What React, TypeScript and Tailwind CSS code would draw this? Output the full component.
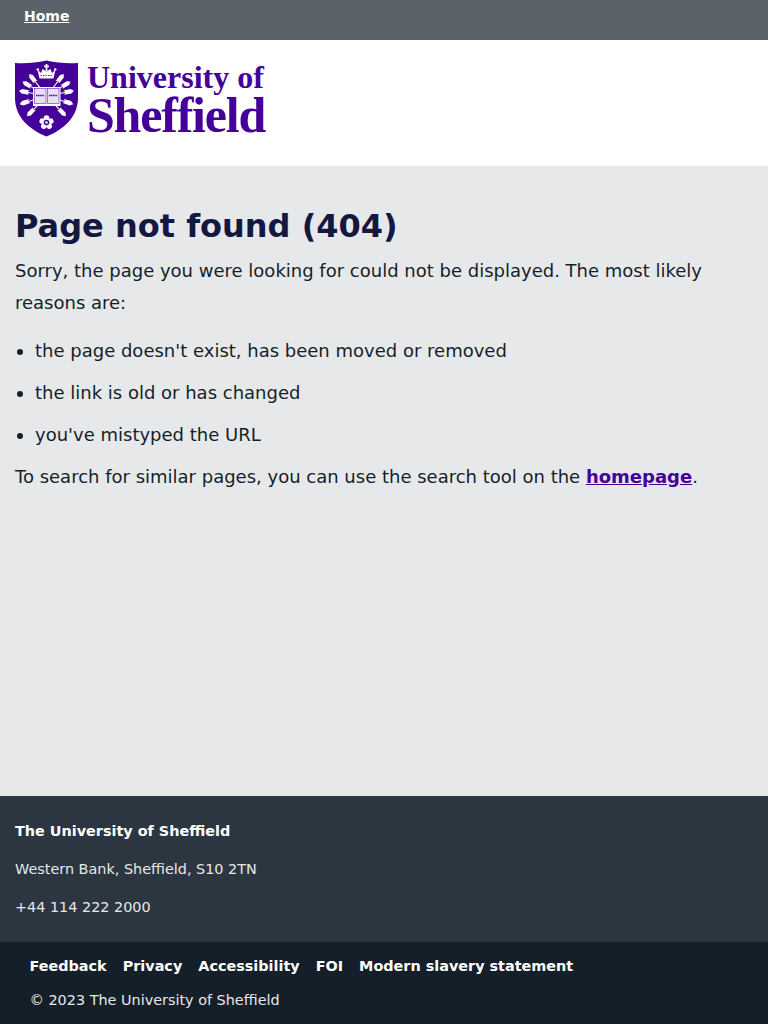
const sans = "font-['DejaVu_Sans',sans-serif]";

function Arrow({ angle }: { angle: number }) {
  return (
    <g transform={`rotate(${angle} 31.5 36)`}>
      <line x1="31.5" y1="36" x2="31.5" y2="12" stroke="#fff" strokeWidth="1.1" />
      <path d="M31.5 8 L33.8 11 L33.6 18.5 L31.5 16.5 L29.4 18.5 L29.2 11 Z" fill="#fff" />
    </g>
  );
}

function Shield() {
  return (
    <svg viewBox="0 0 64 77" className="h-[77px] w-[64px] shrink-0" aria-hidden="true">
      <path
        d="M0 3 C11 3.5 21 3 31.5 0.5 C42 3 52 3.5 63 3 L63 38 C63 56 50 69 31.5 76.5 C13 69 0 56 0 38 Z"
        fill="#440099"
      />
      {[-38, -59, -79, -107, -136, 38, 59, 79, 107, 136].map((a) => (
        <Arrow key={a} angle={a} />
      ))}
      {/* crown */}
      <path d="M22.5 9.5 L26 13 L27.5 9 L31.5 11.5 L35.5 9 L37 13 L40.5 9.5 L38.5 18.5 L24.5 18.5 Z" fill="#fff" />
      <circle cx="22.8" cy="9.5" r="1.3" fill="#fff" />
      <circle cx="40.2" cy="9.5" r="1.3" fill="#fff" />
      <rect x="30.6" y="4" width="1.8" height="7" fill="#fff" />
      <rect x="29" y="5.5" width="5" height="1.7" fill="#fff" />
      <path d="M25.5 15.5 H37.5" stroke="#440099" strokeWidth="0.8" strokeDasharray="1.5 1" />
      {/* book */}
      <rect x="18" y="27" width="27.5" height="19" fill="#fff" />
      <rect x="19.5" y="28.5" width="11.5" height="15" fill="#e9e0f4" stroke="#440099" strokeWidth="0.5" />
      <rect x="32.5" y="28.5" width="11.5" height="15" fill="#e9e0f4" stroke="#440099" strokeWidth="0.5" />
      <path d="M21 35.5 H29.5 M34 35.5 H42.5" stroke="#440099" strokeWidth="1.5" strokeDasharray="1.5 0.6" />
      {/* rose */}
      {[0, 72, 144, 216, 288].map((a) => (
        <circle key={a} cx="31.5" cy="58" r="2.8" fill="#fff" transform={`rotate(${a} 31.5 62.5)`} />
      ))}
      <circle cx="31.5" cy="62.5" r="2.8" fill="#440099" />
      <circle cx="31.5" cy="62.5" r="1.3" fill="#fff" />
    </svg>
  );
}

export default function App() {
  return (
    <div className={`${sans} flex min-h-[1024px] flex-col bg-[#e7e8ea] text-[#141f2a]`}>
      <nav className="h-10 bg-[#5b6269] pl-6 pt-[4px]">
        <a href="#" className="text-[14px] leading-[20px] font-bold text-white underline">
          Home
        </a>
      </nav>

      <header className="flex h-[126px] items-start gap-[9px] bg-white pl-[15px] pt-5">
        <Shield />
        <div className="-ml-px flex flex-col font-['Liberation_Serif',serif] font-bold text-[#440099]">
          <div className="mt-px text-[32px] leading-[33px]">University of</div>
          <div className="text-[50px] leading-[42px] tracking-[-1.2px]">Sheffield</div>
        </div>
      </header>

      <main className="flex-1 px-[15px] pt-10 text-[18px] leading-[32.4px]">
        <h1 className="text-[32px] leading-[40px] font-bold text-[#131841]">Page not found (404)</h1>
        <p className="mt-[9px] max-w-[700px]">
          Sorry, the page you were looking for could not be displayed. The most likely reasons are:
        </p>
        <ul className="mt-[15px] list-disc pl-5">
          <li className="mb-[9.6px]">the page doesn't exist, has been moved or removed</li>
          <li className="mb-[9.6px]">the link is old or has changed</li>
          <li className="mb-[9.6px]">you've mistyped the URL</li>
        </ul>
        <p>
          To search for similar pages, you can use the search tool on the{" "}
          <a href="#" className="font-bold text-[#440099] underline">
            homepage
          </a>
          .
        </p>
      </main>

      <footer className="flex h-[146px] flex-col gap-[18px] bg-[#2c3640] px-[15px] pt-[25px] text-[14.4px] leading-[20px] text-[#e7e8ea]">
        <div className="font-bold text-white">The University of Sheffield</div>
        <div>Western Bank, Sheffield, S10 2TN</div>
        <div>+44 114 222 2000</div>
      </footer>

      <div className="h-[82px] bg-[#141f2a] pl-[29.5px] pt-[14px] text-[14.4px] leading-[20px] text-[#e7e8ea]">
        <div className="flex gap-4 font-bold text-white">
          <a href="#">Feedback</a>
          <a href="#">Privacy</a>
          <a href="#">Accessibility</a>
          <a href="#">FOI</a>
          <a href="#">Modern slavery statement</a>
        </div>
        <div className="mt-[14px]">© 2023 The University of Sheffield</div>
      </div>
    </div>
  );
}
